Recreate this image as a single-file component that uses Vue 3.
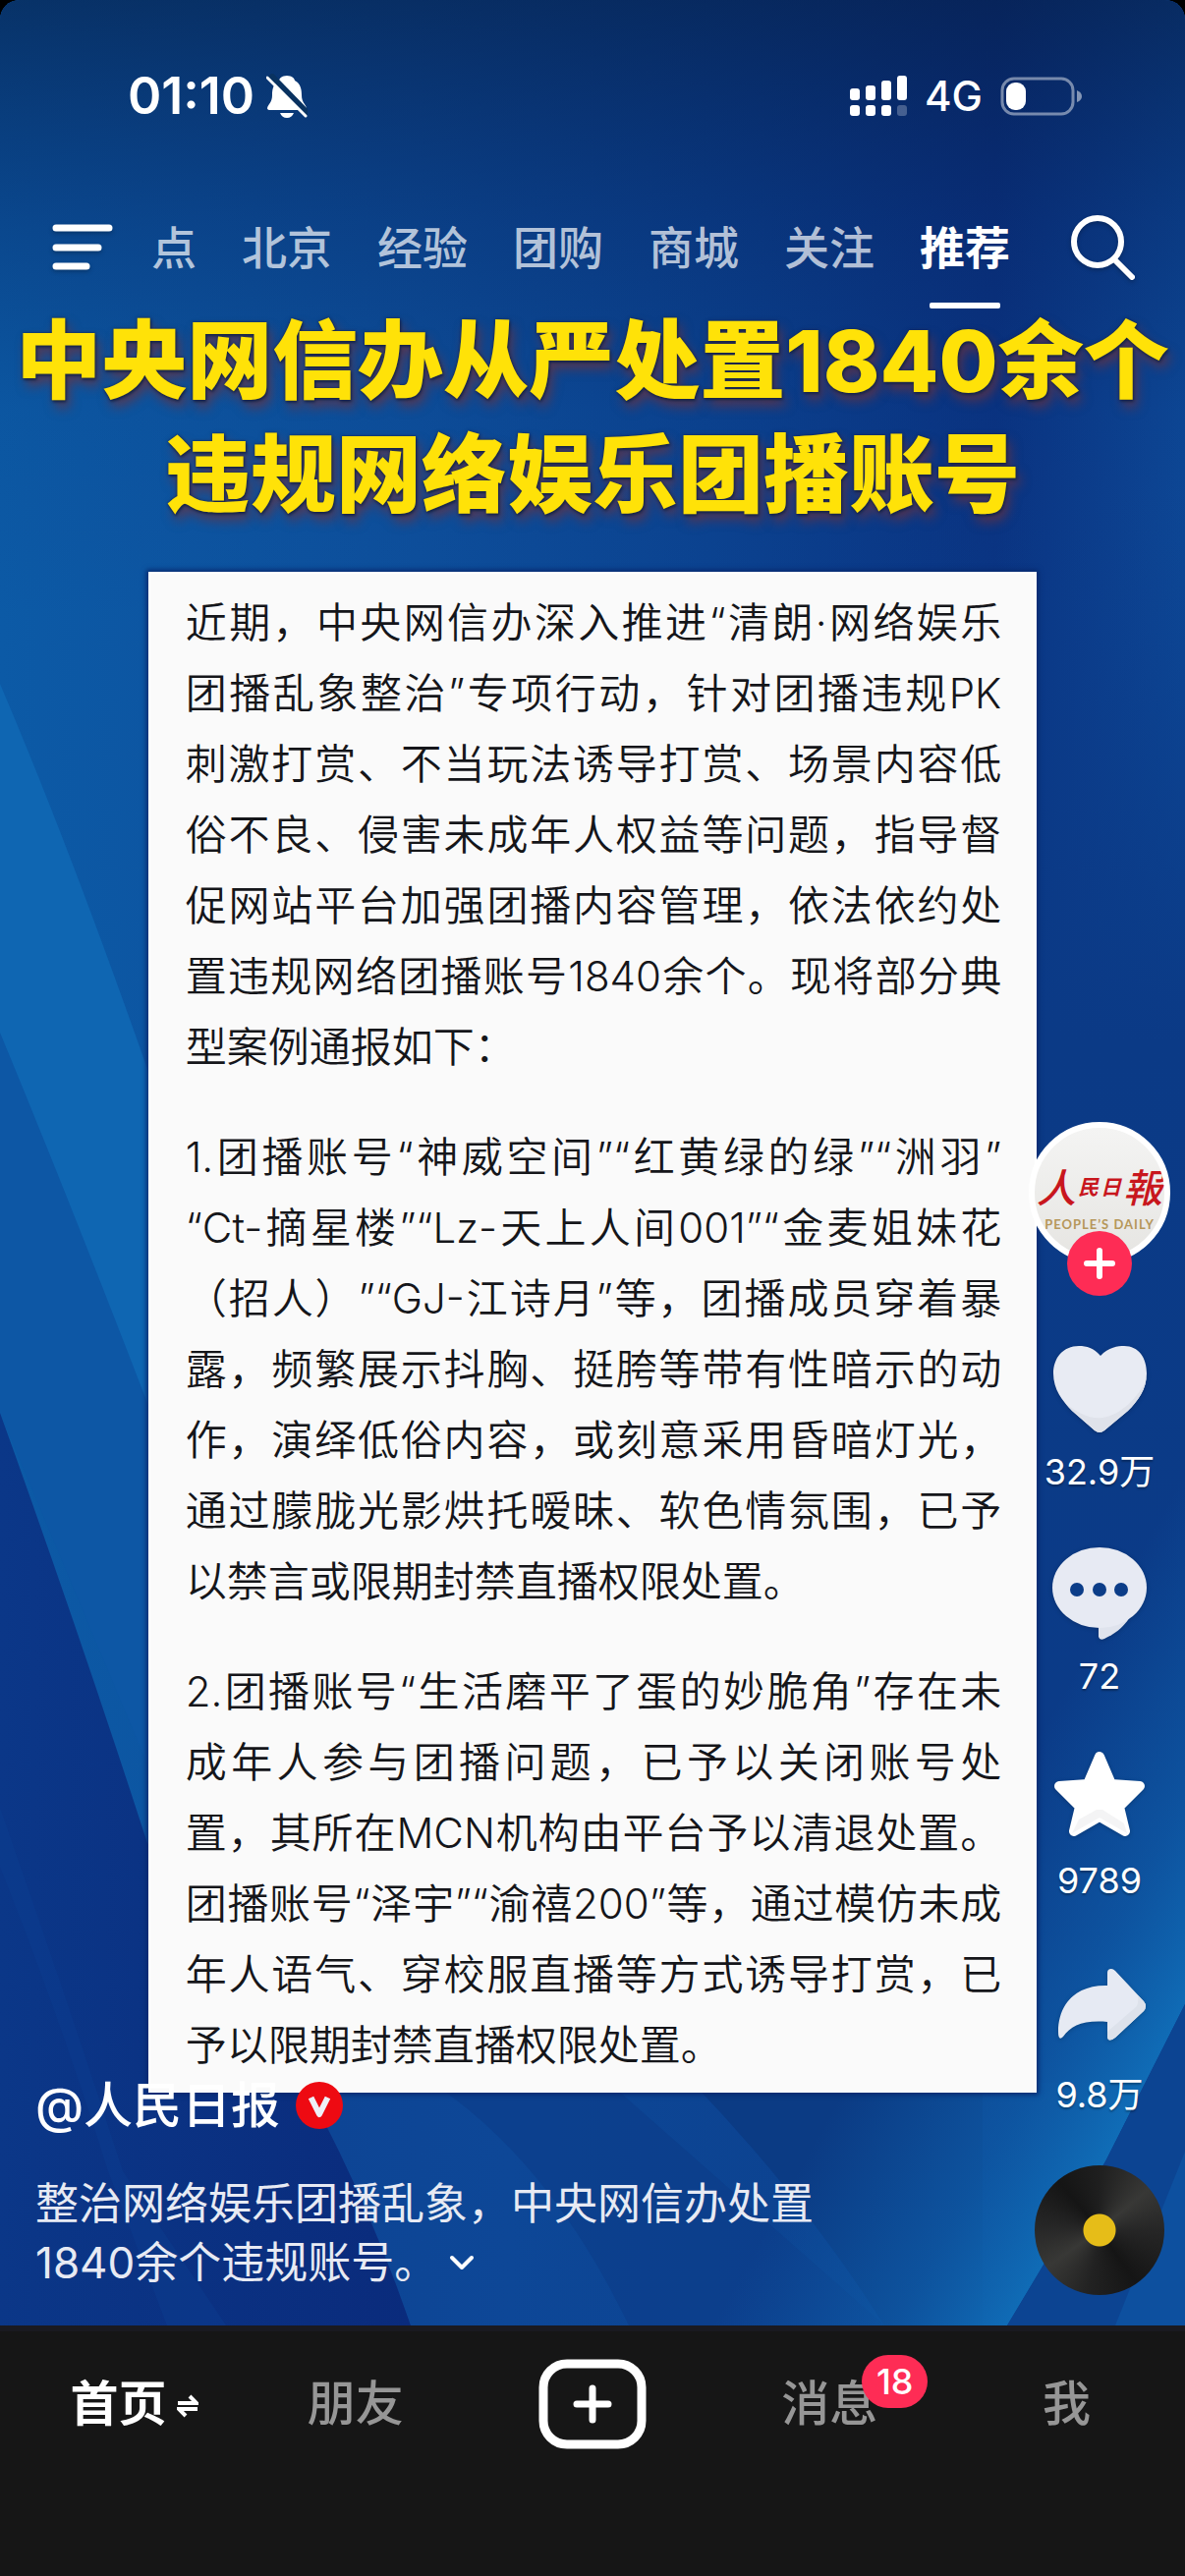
<script setup>
import { ref } from 'vue'

const tabs = ['点', '北京', '经验', '团购', '商城', '关注', '推荐']
const activeTab = ref('推荐')

const headline = ['中央网信办从严处置1840余个', '违规网络娱乐团播账号']

const paragraphs = [
  [
    '近期，中央网信办深入推进“清朗·网络娱乐',
    '团播乱象整治”专项行动，针对团播违规PK',
    '刺激打赏、不当玩法诱导打赏、场景内容低',
    '俗不良、侵害未成年人权益等问题，指导督',
    '促网站平台加强团播内容管理，依法依约处',
    '置违规网络团播账号1840余个。现将部分典',
    '型案例通报如下：',
  ],
  [
    '1.团播账号“神威空间”“红黄绿的绿”“洲羽”',
    '“Ct-摘星楼”“Lz-天上人间001”“金麦姐妹花',
    '（招人）”“GJ-江诗月”等，团播成员穿着暴',
    '露，频繁展示抖胸、挺胯等带有性暗示的动',
    '作，演绎低俗内容，或刻意采用昏暗灯光，',
    '通过朦胧光影烘托暧昧、软色情氛围，已予',
    '以禁言或限期封禁直播权限处置。',
  ],
  [
    '2.团播账号“生活磨平了蛋的妙脆角”存在未',
    '成年人参与团播问题，已予以关闭账号处',
    '置，其所在MCN机构由平台予以清退处置。',
    '团播账号“泽宇”“渝禧200”等，通过模仿未成',
    '年人语气、穿校服直播等方式诱导打赏，已',
    '予以限期封禁直播权限处置。',
  ],
]

const description = ['整治网络娱乐团播乱象，中央网信办处置', '1840余个违规账号。']
</script>

<template>
  <div class="app" lang="zh-CN">
    <main class="stage">
      <svg class="backdrop" viewBox="0 0 1206 2367" preserveAspectRatio="none" aria-hidden="true">
        <defs>
          <linearGradient id="base" x1="0" y1="0" x2="1" y2="0">
            <stop offset="0" stop-color="#0c5aa6" />
            <stop offset="0.35" stop-color="#0d4f9c" />
            <stop offset="0.6" stop-color="#0b4391" />
            <stop offset="0.84" stop-color="#0a3483" />
            <stop offset="1" stop-color="#0d4897" />
          </linearGradient>
          <linearGradient id="shade" x1="0" y1="0" x2="0" y2="1">
            <stop offset="0" stop-color="#051a42" stop-opacity="0.62" />
            <stop offset="0.35" stop-color="#051a52" stop-opacity="0.3" />
            <stop offset="0.65" stop-color="#051a52" stop-opacity="0.06" />
            <stop offset="1" stop-color="#051a52" stop-opacity="0" />
          </linearGradient>
          <linearGradient id="right" x1="0" y1="0" x2="0" y2="1">
            <stop offset="0" stop-color="#0b3a86" stop-opacity="0" />
            <stop offset="0.3" stop-color="#0b3a86" />
            <stop offset="1" stop-color="#0b3c89" />
          </linearGradient>
          <linearGradient id="dark" x1="0" y1="0" x2="1" y2="0">
            <stop offset="0" stop-color="#0b3788" />
            <stop offset="1" stop-color="#0a2b7c" />
          </linearGradient>
          <linearGradient id="floor" x1="0" y1="0" x2="1" y2="0">
            <stop offset="0" stop-color="#0d4393" />
            <stop offset="0.35" stop-color="#0d4797" />
            <stop offset="1" stop-color="#0b3d88" />
          </linearGradient>
          <linearGradient id="ray" gradientUnits="userSpaceOnUse" x1="890" y1="2070" x2="1125" y2="2200">
            <stop offset="0" stop-color="#0f62ae" stop-opacity="0" />
            <stop offset="0.6" stop-color="#0f62ae" stop-opacity="0.6" />
            <stop offset="1" stop-color="#106db7" />
          </linearGradient>
        </defs>
        <rect width="1206" height="2367" fill="url(#base)" />
        <rect width="1206" height="640" fill="url(#shade)" />
        <rect x="900" y="500" width="306" height="1867" fill="url(#right)" />
        <path d="M0 696Q70 860 150 1088L400 1900H300L0 1438Z" fill="#0f66b2" />
        <path d="M0 1051Q70 1220 150 1428L420 2100L290 2130L0 1438Z" fill="#0d57a5" />
        <path d="M150 1876L290 2120H1206V2367H150Z" fill="url(#floor)" />
        <path d="M440 2120H620L900 2367H640Q560 2200 440 2120Z" fill="#0b3a86" opacity="0.5" />
        <path d="M705 2120H1000V2367H900Q820 2240 705 2120Z" fill="#0b3b84" />
        <path d="M0 1438Q80 1660 150 1876Q330 2110 418 2367H0Z" fill="url(#dark)" />
        <path d="M0 1840Q70 2040 125 2210L230 2367H170L110 2210Q60 2050 0 1900Z" fill="#0d3f90" opacity="0.4" />
        <path d="M1206 1400V2040L1125 2200L1025 2367H700L800 2128L1000 1600Z" fill="url(#ray)" />
        <path d="M1206 2040L1125 2200L1025 2367H1206Z" fill="#0c4492" />
        <path d="M1206 2190L1135 2367H1206Z" fill="#0d509f" />
      </svg>

      <header class="top">
        <div class="status">
          <div class="status-side">
            <time class="clock">01:10</time>
            <svg width="42" height="46" viewBox="0 0 42 46" role="img" aria-label="静音">
              <path d="M21 2C26 2 29 5 29 7C35 10 36 16 36 22C36 29 40 31 41 35Q41 37 38 37H4Q1 37 1 35C2 31 6 29 6 22C6 16 7 10 13 7C13 5 16 2 21 2Z" fill="#fff" />
              <path d="M14 40H28Q26 45 21 45T14 40Z" fill="#fff" />
              <path d="M4 1L43 41" stroke="#093260" stroke-width="6" />
              <path d="M1 4L40 43" stroke="#fff" stroke-width="3" stroke-linecap="round" />
            </svg>
          </div>
          <div class="status-side">
            <svg width="58" height="42" viewBox="0 0 58 42" fill="#fff" role="img" aria-label="信号">
              <rect x="0" y="13" width="10" height="12" rx="3" />
              <rect x="16" y="10" width="10" height="15" rx="3" />
              <rect x="32" y="5" width="10" height="20" rx="3" />
              <rect x="48" y="0" width="10" height="25" rx="3" />
              <rect x="0" y="30" width="10" height="11" rx="3" />
              <rect x="16" y="30" width="10" height="11" rx="3" />
              <rect x="32" y="30" width="10" height="11" rx="3" />
              <rect x="48" y="30" width="10" height="11" rx="3" opacity="0.25" />
            </svg>
            <span class="network">4G</span>
            <svg width="84" height="40" viewBox="0 0 84 40" role="img" aria-label="电池">
              <rect x="2" y="2" width="72" height="36" rx="12" fill="none" stroke="#fff" stroke-opacity="0.45" stroke-width="3" />
              <rect x="6" y="6" width="20" height="28" rx="9" fill="#fff" />
              <path d="M78 14Q83 16 83 20T78 26Z" fill="#fff" fill-opacity="0.5" />
            </svg>
          </div>
        </div>

        <nav class="channels" aria-label="频道">
          <button class="icon-button" aria-label="菜单">
            <svg width="64" height="52" viewBox="0 0 64 52" stroke="#fff" stroke-width="7" stroke-linecap="round">
              <path d="M5 6H59M5 26H48M5 45H36" />
            </svg>
          </button>
          <div class="tabs">
            <button
              v-for="tab in tabs"
              :key="tab"
              class="tab"
              :class="{ active: tab === activeTab }"
              @click="activeTab = tab"
            >{{ tab }}</button>
          </div>
          <button class="icon-button search" aria-label="搜索">
            <svg width="66" height="68" viewBox="0 0 66 68" fill="none" stroke="#fff" stroke-width="6" stroke-linecap="round">
              <circle cx="27" cy="28" r="24" />
              <path d="M44 46L62 64" />
            </svg>
          </button>
        </nav>
      </header>

      <h1 class="headline">
        <span v-for="line in headline" :key="line">{{ line }}</span>
      </h1>

      <article class="notice">
        <p v-for="(lines, i) in paragraphs" :key="i">
          <span v-for="line in lines" :key="line" class="line">{{ line }}</span>
        </p>
      </article>

      <section class="caption">
        <h2 class="author">
          @人民日报
          <svg width="48" height="48" viewBox="0 0 48 48" role="img" aria-label="认证">
            <circle cx="24" cy="24" r="24" fill="#ee0a12" />
            <path d="M15.500 16L24 33L32.500 16" fill="none" stroke="#eef0f8" stroke-width="6" stroke-linejoin="round" />
          </svg>
        </h2>
        <p class="description">
          <span class="line-plain">{{ description[0] }}</span>
          <span class="line-plain">
            {{ description[1] }}
            <button class="expand" aria-label="展开">
              <svg width="26" height="18" viewBox="0 0 26 18" fill="none" stroke="#fff" stroke-width="4" stroke-linecap="round" stroke-linejoin="round">
                <path d="M3 4L13 14L23 4" />
              </svg>
            </button>
          </span>
        </p>
      </section>

      <aside class="rail">
        <div class="profile">
          <a class="avatar" href="#" aria-label="人民日报">
            <span class="logo"><b>人</b><i>民</i><i>日</i><b>報</b></span>
            <span class="logo-en">PEOPLE’S DAILY</span>
          </a>
          <button class="follow" aria-label="关注">
            <svg width="34" height="34" viewBox="0 0 34 34" stroke="#fff" stroke-width="6" stroke-linecap="round">
              <path d="M17 4V30M4 17H30" />
            </svg>
          </button>
        </div>
        <button class="action">
          <svg width="98" height="96" viewBox="0 0 98 96">
            <path d="M50 14C58 5 68 4 74 4C89 4 97 16 97 32C97 48 88 60 78 70L54 90Q49 94 44 90L21 70C11 60 2 48 2 32C2 16 12 4 28 4C36 4 43 6 50 14Z" fill="#e8ebf3" />
            <path d="M97 32C97 48 88 60 78 70L54 90Q49 94 44 90L21 70L14 62C26 72 40 79 52 77C72 74 88 56 97 38Z" fill="#dfe2ea" />
          </svg>
          <span>32.9万</span>
        </button>
        <button class="action">
          <svg width="98" height="96" viewBox="0 0 98 96">
            <path d="M48 78V92Q49 96 54 94C64 89 72 84 80 72Z" fill="#dfe3ed" />
            <ellipse cx="49" cy="42" rx="48" ry="41" fill="#e7eaf3" />
            <g fill="#0c3d88">
              <circle cx="26" cy="44" r="7" />
              <circle cx="49" cy="44" r="7" />
              <circle cx="71" cy="44" r="7" />
            </g>
          </svg>
          <span>72</span>
        </button>
        <button class="action">
          <svg width="98" height="96" viewBox="0 0 98 96">
            <path d="M49 6L61 34L90 36L69 57L75 82L49 67L23 82L29 57L8 36L37 34Z" fill="#fff" stroke="#fff" stroke-width="10" stroke-linejoin="round" />
            <path d="M21 84L28 70L46 60L52 60L74 74L77 84L49 68Z" fill="#f4f4f5" />
          </svg>
          <span>9789</span>
        </button>
        <button class="action share">
          <svg width="98" height="106" viewBox="0 0 98 106">
            <path d="M57 18Q57 14 61 14Q63 14 65 16L94 47Q98 52 94 57L65 84Q57 90 57 82V68C32 66 20 72 12 83Q7 88 7 78C7 50 25 30 57 31Z" fill="#e6eaf3" />
            <path d="M57 78L87 52Q89 49 88 41L94 47Q98 52 94 57L65 84Q57 90 57 82Z" fill="#dde2eb" />
          </svg>
          <span>9.8万</span>
        </button>
        <a class="disc" href="#" aria-label="原声"></a>
      </aside>
    </main>

    <nav class="dock" aria-label="主导航">
      <a class="dock-item active" href="#">
        <span class="dock-label">
          首页
          <svg class="swap" width="22" height="24" viewBox="0 0 22 24" fill="none" stroke="#fff" stroke-width="4">
            <path d="M1 9H20L13 2M21 15H2L9 22" />
          </svg>
        </span>
      </a>
      <a class="dock-item" href="#"><span class="dock-label">朋友</span></a>
      <button class="dock-item" aria-label="发布">
        <svg width="110" height="92" viewBox="0 0 110 92" fill="none" stroke="#fff">
          <rect x="5" y="5" width="100" height="82" rx="24" stroke-width="9" />
          <path d="M55 30V62M39 46H71" stroke-width="7" stroke-linecap="round" />
        </svg>
      </button>
      <a class="dock-item" href="#">
        <span class="dock-label">消息<em class="badge">18</em></span>
      </a>
      <a class="dock-item" href="#"><span class="dock-label">我</span></a>
    </nav>
  </div>
</template>

<style>
body {
  margin: 0;
  background: #000;
}
</style>

<style scoped>
.app {
  display: flex;
  flex-direction: column;
  min-height: 100vh;
  font-family: Inter, "Noto Sans CJK SC", sans-serif;
  color: #fff;
}

button {
  padding: 0;
  border: 0;
  background: none;
  color: inherit;
  font: inherit;
  cursor: pointer;
}

a {
  color: inherit;
  text-decoration: none;
}

svg {
  display: block;
  flex: none;
}

.stage {
  position: relative;
  flex: 1;
  overflow: hidden;
  border-radius: 20px 20px 0 0;
  background: #0b3c89;
}

.backdrop {
  position: absolute;
  inset: 0;
  width: 100%;
  height: 100%;
}

.top,
.headline,
.notice {
  position: relative;
}

.status {
  display: flex;
  justify-content: space-between;
  align-items: center;
  height: 60px;
  padding: 68px 104px 0 130px;
}

.status-side {
  display: flex;
  align-items: center;
  gap: 12px;
}

.status-side + .status-side {
  gap: 18px;
}

.clock {
  font-size: 52px;
  font-weight: 600;
  line-height: 60px;
}

.network {
  font-size: 42px;
  font-weight: 500;
  line-height: 60px;
}

.channels {
  display: flex;
  align-items: center;
  gap: 38px;
  height: 124px;
  margin-top: 62px;
  padding: 0 50px 0 52px;
}

.icon-button svg {
  filter: drop-shadow(0 2px 2px rgba(0, 0, 0, 0.25));
}

.search {
  margin-left: auto;
}

.tabs {
  display: flex;
  gap: 46px;
}

.tab {
  position: relative;
  font-size: 46px;
  font-weight: 500;
  line-height: 124px;
  color: rgba(255, 255, 255, 0.7);
}

.tab.active {
  color: #fff;
  font-weight: 700;
}

.tab.active::after {
  content: "";
  position: absolute;
  left: 10px;
  right: 10px;
  bottom: 0;
  height: 6px;
  border-radius: 2px;
  background: #fff;
}

.headline {
  margin: -4px 0 0;
  font-size: 87px;
  font-weight: 800;
  line-height: 116px;
  text-align: center;
  color: #ffe208;
  text-shadow: 0 0 3px #16254a, 1px 2px 3px #16254a, 4px 8px 12px rgba(110, 50, 60, 0.75);
}

.headline span {
  display: block;
  white-space: nowrap;
}

.notice {
  width: 75%;
  box-sizing: border-box;
  margin: 40px auto 0;
  padding: 16px 36px 12px 38px;
  background: #fafafa;
  box-shadow: 0 0 0 2px #fff inset, 0 0 5px 2px #07296e;
  color: #15161a;
  font-size: 42px;
  font-weight: 350;
  line-height: 72px;
  text-spacing-trim: space-all;
}

.notice p {
  margin: 0 0 40px;
}

.notice p:last-child {
  margin-bottom: 0;
}

.line {
  display: block;
  white-space: nowrap;
  text-align: justify;
  text-align-last: justify;
}

.line:last-child {
  text-align-last: left;
}

.caption {
  position: absolute;
  left: 36px;
  bottom: 34px;
}

.author {
  display: flex;
  align-items: center;
  gap: 16px;
  margin: 0 0 40px;
  font-size: 50px;
  font-weight: 500;
  line-height: 60px;
}

.description {
  margin: 0;
  font-size: 44px;
  line-height: 60px;
  color: #e7eaf3;
}

.line-plain {
  display: flex;
  align-items: center;
  gap: 12px;
}

.rail {
  position: absolute;
  right: 15px;
  bottom: 31px;
  display: flex;
  flex-direction: column;
  align-items: center;
  width: 144px;
}

.profile {
  position: relative;
  margin-bottom: 80px;
}

.avatar {
  display: flex;
  flex-direction: column;
  align-items: center;
  box-sizing: border-box;
  width: 144px;
  height: 144px;
  padding-top: 30px;
  border: 6px solid #fff;
  border-radius: 50%;
  overflow: hidden;
  background: linear-gradient(#f4f4f3, #e6e5e2);
}

.logo {
  display: flex;
  align-items: center;
  gap: 2px;
  height: 58px;
  font-style: italic;
  color: #c8161d;
}

.logo b {
  font-size: 40px;
  font-weight: 500;
}

.logo i {
  font-size: 21px;
  font-weight: 700;
}

.logo-en {
  font: 700 13px/20px Lato, sans-serif;
  letter-spacing: 1px;
  white-space: nowrap;
  color: #b6975a;
}

.follow {
  position: absolute;
  left: 39px;
  bottom: -33px;
  display: grid;
  place-items: center;
  width: 66px;
  height: 66px;
  border-radius: 50%;
  background: #fe2c55;
}

.action {
  display: flex;
  flex-direction: column;
  align-items: center;
  gap: 14px;
  margin-bottom: 54px;
  font-size: 36px;
  font-weight: 400;
  line-height: 44px;
  text-shadow: 0 2px 2px rgba(0, 0, 0, 0.3);
}

.action svg {
  filter: drop-shadow(0 1px 2px rgba(0, 0, 0, 0.2));
}

.action.share {
  margin-bottom: 50px;
}

.disc {
  width: 132px;
  height: 132px;
  border-radius: 50%;
  background:
    radial-gradient(circle, #e6bd18 16px, transparent 17px),
    conic-gradient(#1f1f1f, #383836 50deg, #262626 90deg, #151515 145deg, #222 190deg, #383836 235deg, #262626 275deg, #151515 320deg, #1f1f1f);
}

.dock {
  display: flex;
  align-items: flex-start;
  height: 249px;
  border-top: 6px solid #1a1a20;
  background: #161616;
}

.dock-item {
  flex: 1;
  display: flex;
  justify-content: center;
  align-items: center;
  height: 148px;
  font-size: 49px;
  font-weight: 500;
  line-height: 60px;
  color: #969696;
}

.dock-item.active {
  color: #fff;
  font-weight: 700;
}

.dock-label {
  position: relative;
}

.swap {
  position: absolute;
  left: 100%;
  top: 20px;
  margin-left: 10px;
}

.badge {
  position: absolute;
  left: 82px;
  top: -20px;
  min-width: 67px;
  border-radius: 27px;
  background: #fe2c55;
  color: #fff;
  font-size: 36px;
  font-style: normal;
  font-weight: 500;
  line-height: 54px;
  text-align: center;
}
</style>
